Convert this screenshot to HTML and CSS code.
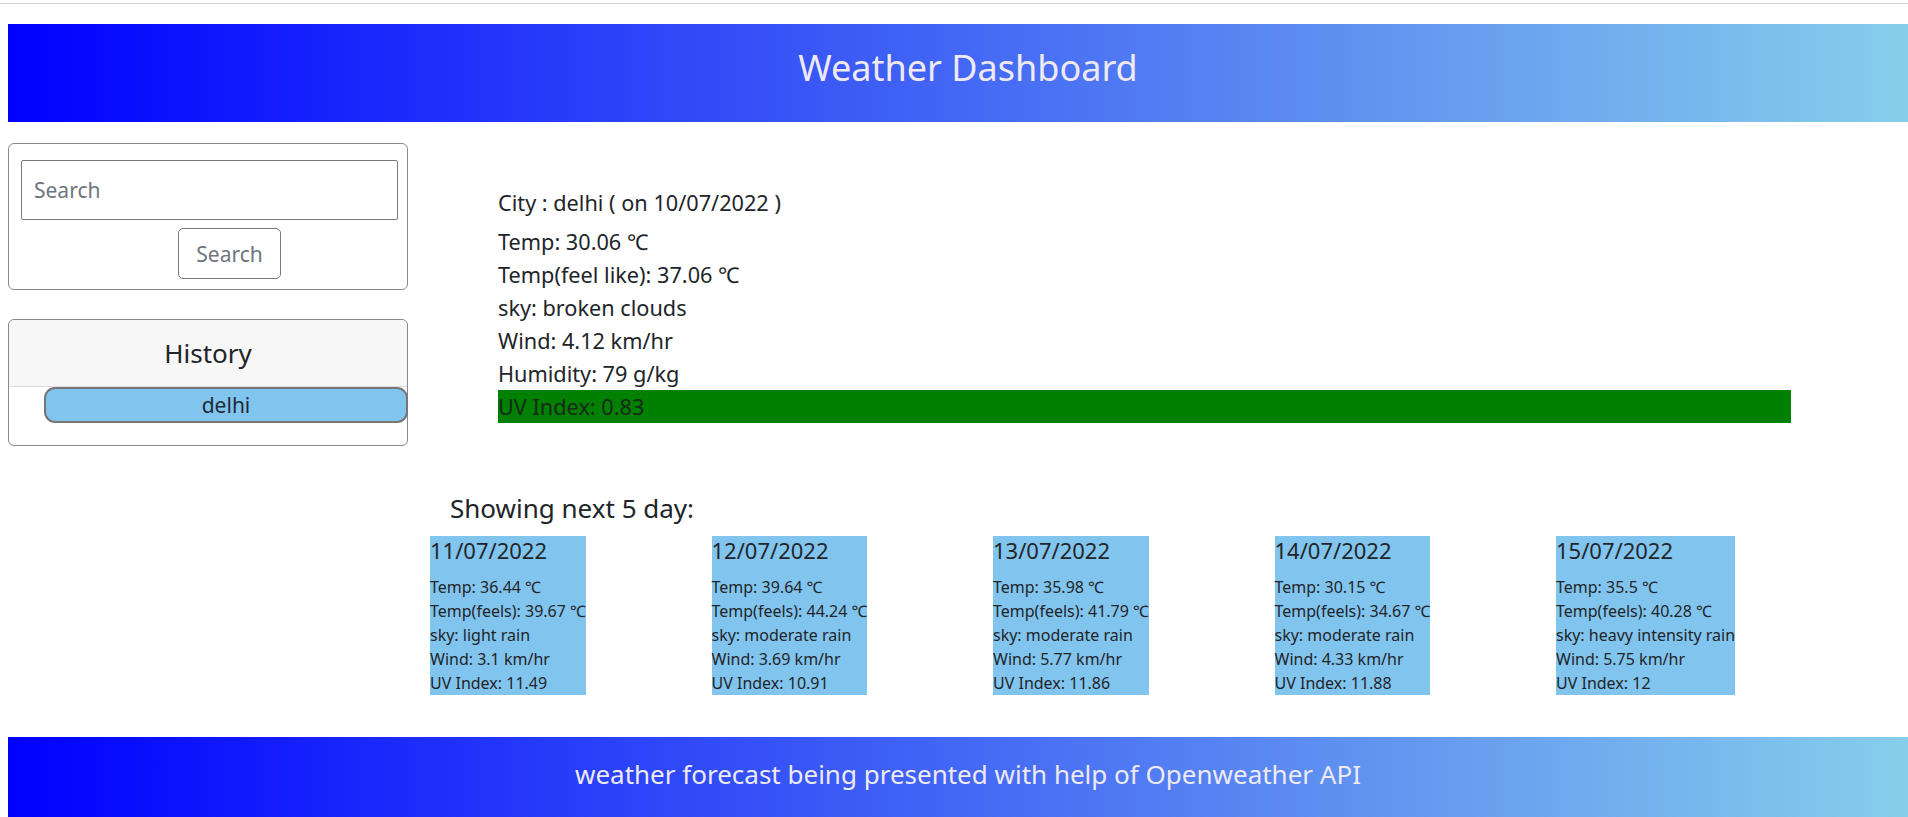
FILE: index.html
```html
<!DOCTYPE html>
<html lang="en">
<head>
<meta charset="utf-8">
<title>Weather Dashboard</title>
<link rel="stylesheet" href="styles.css">
</head>
<body>
<div class="topline"></div>
<header class="site-header">
  <h1 class="site-title">Weather Dashboard</h1>
</header>
<div class="layout">
  <aside class="sidebar">
    <div class="panel search-panel">
      <input class="search-input" type="text" placeholder="Search">
      <button class="search-btn" type="button">Search</button>
    </div>
    <div class="panel history-panel">
      <div class="history-head">History</div>
      <div class="history-list">
        <button class="history-item" type="button">delhi</button>
      </div>
    </div>
  </aside>
  <main class="content">
    <section class="current">
      <p class="city">City : delhi ( on 10/07/2022 )</p>
      <p class="line">Temp: 30.06 ℃</p>
      <p class="line">Temp(feel like): 37.06 ℃</p>
      <p class="line">sky: broken clouds</p>
      <p class="line">Wind: 4.12 km/hr</p>
      <p class="line">Humidity: 79 g/kg</p>
      <p class="line uv">UV Index: 0.83</p>
    </section>
    <h4 class="forecast-title">Showing next 5 day:</h4>
    <div class="forecast-row">
      <div class="day-col">
        <div class="day-card">
          <h5 class="day-date">11/07/2022</h5>
          <p class="day-line">Temp: 36.44 ℃</p>
          <p class="day-line">Temp(feels): 39.67 ℃</p>
          <p class="day-line">sky: light rain</p>
          <p class="day-line">Wind: 3.1 km/hr</p>
          <p class="day-line">UV Index: 11.49</p>
        </div>
      </div>
      <div class="day-col">
        <div class="day-card">
          <h5 class="day-date">12/07/2022</h5>
          <p class="day-line">Temp: 39.64 ℃</p>
          <p class="day-line">Temp(feels): 44.24 ℃</p>
          <p class="day-line">sky: moderate rain</p>
          <p class="day-line">Wind: 3.69 km/hr</p>
          <p class="day-line">UV Index: 10.91</p>
        </div>
      </div>
      <div class="day-col">
        <div class="day-card">
          <h5 class="day-date">13/07/2022</h5>
          <p class="day-line">Temp: 35.98 ℃</p>
          <p class="day-line">Temp(feels): 41.79 ℃</p>
          <p class="day-line">sky: moderate rain</p>
          <p class="day-line">Wind: 5.77 km/hr</p>
          <p class="day-line">UV Index: 11.86</p>
        </div>
      </div>
      <div class="day-col">
        <div class="day-card">
          <h5 class="day-date">14/07/2022</h5>
          <p class="day-line">Temp: 30.15 ℃</p>
          <p class="day-line">Temp(feels): 34.67 ℃</p>
          <p class="day-line">sky: moderate rain</p>
          <p class="day-line">Wind: 4.33 km/hr</p>
          <p class="day-line">UV Index: 11.88</p>
        </div>
      </div>
      <div class="day-col">
        <div class="day-card">
          <h5 class="day-date">15/07/2022</h5>
          <p class="day-line">Temp: 35.5 ℃</p>
          <p class="day-line">Temp(feels): 40.28 ℃</p>
          <p class="day-line">sky: heavy intensity rain</p>
          <p class="day-line">Wind: 5.75 km/hr</p>
          <p class="day-line">UV Index: 12</p>
        </div>
      </div>
    </div>
  </main>
</div>
<footer class="site-footer">
  <p class="footer-text">weather forecast being presented with help of Openweather API</p>
</footer>
</body>
</html>
```

FILE: styles.css
```css
* { box-sizing: border-box; }

html, body {
  margin: 0;
  padding: 0;
  background: #ffffff;
  overflow: hidden;
}

body {
  font-family: "Noto Sans", "Open Sans", "DejaVu Sans", sans-serif;
  color: #212529;
}

.topline {
  height: 1px;
  margin-top: 3px;
  background: #d2d2d2;
}

.site-header {
  margin: 20px 0 0 8px;
  height: 98px;
  background: linear-gradient(to right, #0000ff, #87ceeb);
  display: flex;
  align-items: center;
  justify-content: center;
  padding: 0 0 10px 20px;
}

.site-title {
  margin: 0;
  font-size: 36px;
  font-weight: 400;
  line-height: 1.2;
  color: #efe9f2;
}

.layout {
  display: flex;
  align-items: flex-start;
}

.sidebar {
  width: 400px;
  margin: 21px 0 0 8px;
  flex: none;
}

.panel {
  border: 1px solid #8a8a8a;
  border-radius: 6px;
  background: #fff;
}

.search-panel {
  padding: 16px 9px 10px 12px;
  display: flex;
  flex-direction: column;
  align-items: flex-start;
}

.search-input {
  width: 377px;
  height: 60px;
  border: 1px solid #7a7a7a;
  border-radius: 2px;
  padding: 0 12px;
  font-family: inherit;
  font-size: 21px;
  color: #495057;
  background: #fff;
}

.search-input::placeholder {
  color: #6c757d;
}

.search-btn {
  margin: 8px 0 0 157px;
  width: 103px;
  height: 51px;
  border: 1px solid #7a7a7a;
  border-radius: 5px;
  background: #fff;
  font-family: inherit;
  font-size: 21px;
  color: #6c757d;
  padding: 0;
}

.history-panel {
  margin-top: 29px;
  overflow: visible;
}

.history-head {
  height: 67px;
  background: #f7f7f7;
  border-bottom: 1px solid #dedede;
  border-radius: 6px 6px 0 0;
  display: flex;
  align-items: center;
  justify-content: center;
  font-size: 26px;
  color: #212529;
}

.history-list {
  padding: 0 0 22px 35px;
}

.history-item {
  display: block;
  width: 364px;
  height: 36px;
  background: #81c4ee;
  border: 2px solid #767676;
  border-radius: 11px;
  font-family: inherit;
  font-size: 21px;
  color: #1e2b38;
  padding: 0;
  line-height: 30px;
}

.content {
  flex: 1;
  padding: 64px 0 0 22px;
}

.current {
  margin-left: 68px;
  width: 1293px;
}

.current p {
  margin: 0;
  font-size: 21.7px;
  line-height: 33px;
}

.current .city {
  margin-bottom: 6px;
}

.current .uv {
  background: #008000;
  color: #1a2a1a;
}

.forecast-title {
  margin: 70px 0 13px 20px;
  font-size: 26px;
  font-weight: 400;
  line-height: 30px;
  color: #212529;
}

.forecast-row {
  display: grid;
  grid-template-columns: repeat(5, 281.5px);
}

.day-card {
  width: fit-content;
  background: #81c4ee;
  color: #212529;
}

.day-date {
  margin: 0 0 11px 0;
  font-size: 22px;
  font-weight: 400;
  line-height: 28px;
}

.day-line {
  margin: 0;
  font-size: 16px;
  line-height: 24px;
  white-space: nowrap;
}

.site-footer {
  margin: 42px 0 0 8px;
  background: linear-gradient(to right, #0000ff, #87ceeb);
  padding: 19px 0 40px 20px;
  text-align: center;
}

.footer-text {
  margin: 0;
  font-size: 26px;
  line-height: 36px;
  color: #eeeaf3;
}
```
